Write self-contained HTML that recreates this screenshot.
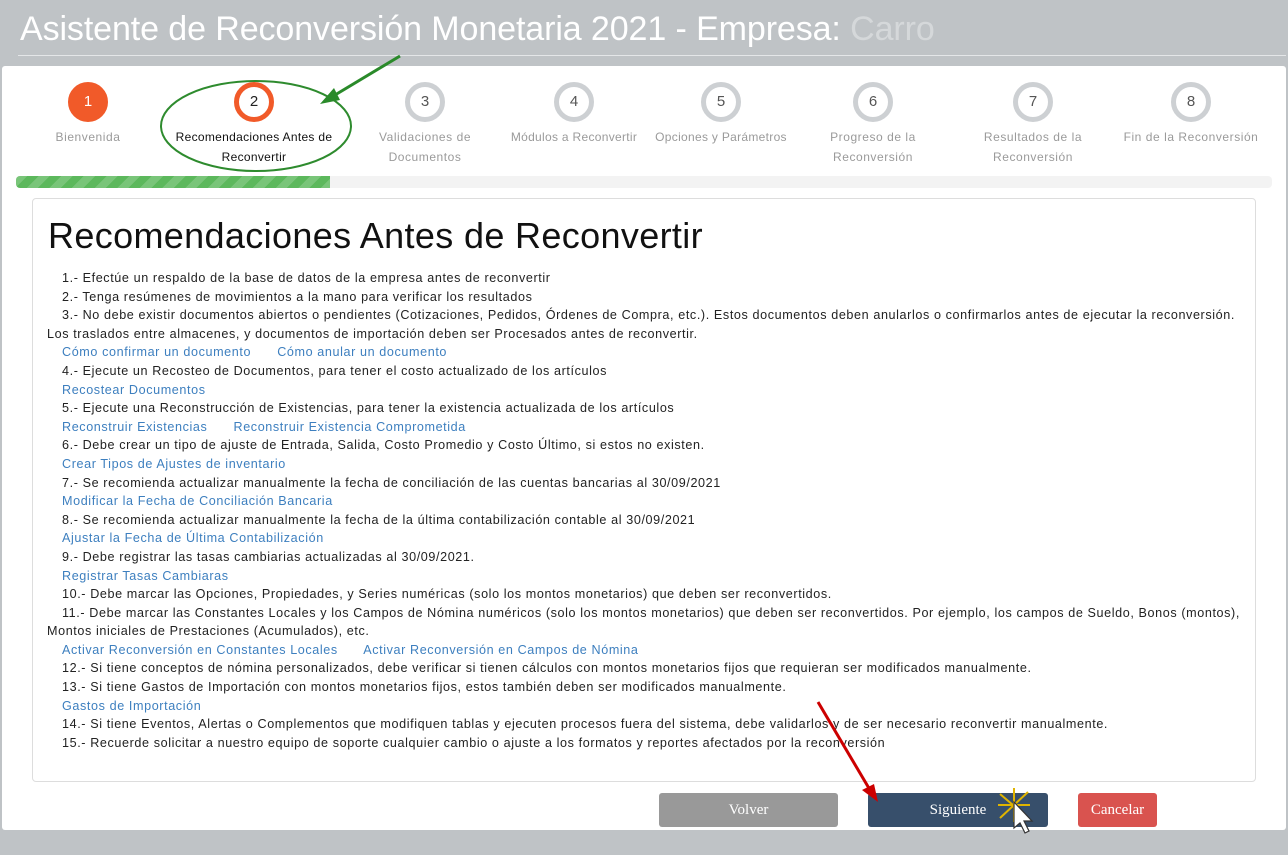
<!DOCTYPE html>
<html><head><meta charset="utf-8"><style>
*{margin:0;padding:0;box-sizing:border-box}
body{width:1288px;height:855px;background:#bfc3c6;font-family:"Liberation Sans",sans-serif;position:relative;overflow:hidden}
.title{position:absolute;left:20px;top:10px;color:#fff;font-size:34px;letter-spacing:-0.1px}
.hr{position:absolute;left:18px;top:55px;width:1268px;height:1px;background:#e4e6e8}
.panel{position:absolute;left:2px;top:66px;width:1284px;height:764px;background:#fff;border-radius:3px}
.step{position:absolute;top:82px;width:170px;margin-left:-85px;text-align:center}
.c{width:40px;height:40px;border-radius:50%;border:5px solid #cdd0d3;margin:0 auto;font-size:15px;color:#555;line-height:30px;background:#fff}
.step .l{font-size:12px;color:#9a9a9a;line-height:20px;margin-top:5px;letter-spacing:.55px}
.bar{position:absolute;left:16px;top:176px;width:1256px;height:12px;background:#f3f3f3;border-radius:4px;overflow:hidden}
.fill{width:314px;height:12px;background:#5cb85c repeating-linear-gradient(135deg,rgba(255,255,255,.18) 0 8px,transparent 8px 16px)}
.box{position:absolute;left:32px;top:198px;width:1224px;height:584px;border:1px solid #ddd;border-radius:4px;background:#fff}
h1{position:absolute;left:15px;top:16px;font-size:36px;font-weight:normal;color:#111;letter-spacing:0.35px}
.txt{position:absolute;left:14px;top:70px;width:1215px;font-size:12.6px;line-height:18.6px;color:#222;letter-spacing:0.6px;white-space:nowrap}
.n{padding-left:15px}
.a{padding-left:15px;color:#3d7fbf}
.a span{margin-right:22px}
.btn{position:absolute;top:793px;height:34px;border-radius:3px;color:#fff;font-family:"Liberation Serif",serif;font-size:15px;text-align:center;line-height:34px}
</style></head><body>
<div class="title">Asistente de Reconversión Monetaria 2021 - Empresa: <span style="color:#d5d8da">Carro</span></div>
<div class="hr"></div>
<div class="panel"></div>
<div class="step" style="left:88px"><div class="c" style="background:#f15a29;border-color:#f15a29;color:#fff">1</div><div class="l">Bienvenida</div></div>
<div class="step" style="left:254px"><div class="c" style="border-color:#f15a29;color:#222">2</div><div class="l" style="color:#111;letter-spacing:.3px">Recomendaciones Antes de<br>Reconvertir</div></div>
<div class="step" style="left:425px"><div class="c">3</div><div class="l">Validaciones de<br>Documentos</div></div>
<div class="step" style="left:574px"><div class="c">4</div><div class="l" style="letter-spacing:.3px">Módulos a Reconvertir</div></div>
<div class="step" style="left:721px"><div class="c">5</div><div class="l" style="letter-spacing:.3px">Opciones y Parámetros</div></div>
<div class="step" style="left:873px"><div class="c">6</div><div class="l">Progreso de la<br>Reconversión</div></div>
<div class="step" style="left:1033px"><div class="c">7</div><div class="l">Resultados de la<br>Reconversión</div></div>
<div class="step" style="left:1191px"><div class="c">8</div><div class="l">Fin de la Reconversión</div></div>
<svg style="position:absolute;left:0;top:0" width="1288" height="200">
<ellipse cx="256" cy="126" rx="95" ry="45" fill="none" stroke="#2e8b2e" stroke-width="2"/>
<line x1="400" y1="56" x2="330" y2="98" stroke="#2a8a2a" stroke-width="3"/>
<polygon points="320,104 334,88 340,100" fill="#2a8a2a"/>
</svg>
<div class="bar"><div class="fill"></div></div>
<div class="box">
<h1>Recomendaciones Antes de Reconvertir</h1>
<div class="txt">
<div class="n">1.- Efectúe un respaldo de la base de datos de la empresa antes de reconvertir</div>
<div class="n">2.- Tenga resúmenes de movimientos a la mano para verificar los resultados</div>
<div class="n">3.- No debe existir documentos abiertos o pendientes (Cotizaciones, Pedidos, Órdenes de Compra, etc.). Estos documentos deben anularlos o confirmarlos antes de ejecutar la reconversión.</div>
<div>Los traslados entre almacenes, y documentos de importación deben ser Procesados antes de reconvertir.</div>
<div class="a"><span>Cómo confirmar un documento</span> <span>Cómo anular un documento</span></div>
<div class="n">4.- Ejecute un Recosteo de Documentos, para tener el costo actualizado de los artículos</div>
<div class="a">Recostear Documentos</div>
<div class="n">5.- Ejecute una Reconstrucción de Existencias, para tener la existencia actualizada de los artículos</div>
<div class="a"><span>Reconstruir Existencias</span> <span>Reconstruir Existencia Comprometida</span></div>
<div class="n">6.- Debe crear un tipo de ajuste de Entrada, Salida, Costo Promedio y Costo Último, si estos no existen.</div>
<div class="a">Crear Tipos de Ajustes de inventario</div>
<div class="n">7.- Se recomienda actualizar manualmente la fecha de conciliación de las cuentas bancarias al 30/09/2021</div>
<div class="a">Modificar la Fecha de Conciliación Bancaria</div>
<div class="n">8.- Se recomienda actualizar manualmente la fecha de la última contabilización contable al 30/09/2021</div>
<div class="a">Ajustar la Fecha de Última Contabilización</div>
<div class="n">9.- Debe registrar las tasas cambiarias actualizadas al 30/09/2021.</div>
<div class="a">Registrar Tasas Cambiaras</div>
<div class="n">10.- Debe marcar las Opciones, Propiedades, y Series numéricas (solo los montos monetarios) que deben ser reconvertidos.</div>
<div class="n">11.- Debe marcar las Constantes Locales y los Campos de Nómina numéricos (solo los montos monetarios) que deben ser reconvertidos. Por ejemplo, los campos de Sueldo, Bonos (montos),</div>
<div>Montos iniciales de Prestaciones (Acumulados), etc.</div>
<div class="a"><span>Activar Reconversión en Constantes Locales</span> <span>Activar Reconversión en Campos de Nómina</span></div>
<div class="n">12.- Si tiene conceptos de nómina personalizados, debe verificar si tienen cálculos con montos monetarios fijos que requieran ser modificados manualmente.</div>
<div class="n">13.- Si tiene Gastos de Importación con montos monetarios fijos, estos también deben ser modificados manualmente.</div>
<div class="a">Gastos de Importación</div>
<div class="n">14.- Si tiene Eventos, Alertas o Complementos que modifiquen tablas y ejecuten procesos fuera del sistema, debe validarlos y de ser necesario reconvertir manualmente.</div>
<div class="n">15.- Recuerde solicitar a nuestro equipo de soporte cualquier cambio o ajuste a los formatos y reportes afectados por la reconversión</div>
</div>
</div>
<div class="btn" style="left:659px;width:179px;background:#999">Volver</div>
<div class="btn" style="left:868px;width:180px;background:#374f6b">Siguiente</div>
<div class="btn" style="left:1078px;width:79px;background:#d9534f">Cancelar</div>
<svg style="position:absolute;left:800px;top:690px" width="250" height="150">
<line x1="18" y1="12" x2="70" y2="100" stroke="#c00" stroke-width="3"/>
<polygon points="78,112 62,100 74,94" fill="#c00"/>
<g stroke="#e0b400" stroke-width="2"><line x1="200" y1="104" x2="226" y2="126"/><line x1="228" y1="102" x2="200" y2="128"/><line x1="198" y1="115" x2="230" y2="115"/><line x1="214" y1="98" x2="214" y2="132"/></g>
<polygon points="214,112 214,138 220,133 225,143 229,141 224,131 232,131" fill="#fff" stroke="#333" stroke-width="1.2"/>
</svg>
</body></html>
